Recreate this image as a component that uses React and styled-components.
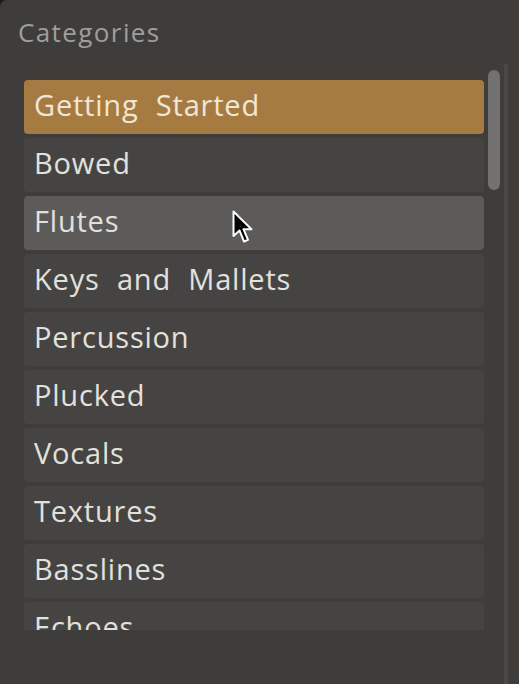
import React from 'react'
import styled, { createGlobalStyle } from 'styled-components'

const categories = [
	'Getting Started',
	'Bowed',
	'Flutes',
	'Keys and Mallets',
	'Percussion',
	'Plucked',
	'Vocals',
	'Textures',
	'Basslines',
	'Echoes',
]

const GlobalStyle = createGlobalStyle`
	html, body {
		margin: 0;
		padding: 0;
		background: #1c1c1b;
	}
	* {
		box-sizing: border-box;
	}
`

const Panel = styled.div`
	width: 519px;
	height: 684px;
	background: #3e3d3b;
	border-top-left-radius: 7px;
	overflow: hidden;
	display: flex;
	flex-direction: column;
	font-family: 'Open Sans', 'DejaVu Sans', sans-serif;
`

const Title = styled.div`
	height: 64px;
	padding: 19px 0 0 18px;
	font-size: 26px;
	line-height: 26px;
	letter-spacing: 1.4px;
	color: #a09e9b;
`

const Body = styled.div`
	flex: 1;
	display: flex;
`

// list is cut at the bottom, the last row peeks in
const Viewport = styled.div`
	width: 488px;
	height: 566px;
	overflow: hidden;
	padding: 16px 4px 0 24px;
	display: flex;
	flex-direction: column;
	gap: 4px;
`

const Row = styled.div`
	position: relative;
	flex-shrink: 0;
	height: 54px;
	padding: 0 0 5px 10px;
	display: flex;
	align-items: center;
	border-radius: 4px;
	font-size: 29px;
	letter-spacing: 0.8px;
	word-spacing: 9px;
	color: ${(p) => (p.$selected ? '#f1e7d6' : '#e3e1dd')};
	background: ${(p) =>
		p.$selected ? '#a57b42' : p.$hovered ? '#5c5b59' : '#454442'};
`

const ScrollColumn = styled.div`
	width: 16px;
	padding-top: 6px;
`

const Thumb = styled.div`
	width: 12px;
	height: 120px;
	border-radius: 6px;
	background: #737170;
`

const Track = styled.div`
	width: 4px;
	background: #4a4947;
`

const Pointer = styled.svg`
	position: absolute;
	left: 208px;
	top: 14px;
	width: 22px;
	height: 34px;
`

const Cursor = () => (
	<Pointer viewBox="0 0 22 34">
		<path
			d="M1.5 1.5 L1.5 26 L7.5 20.5 L12 31.5 L16 29.8 L11.5 19.2 L19.5 19.2 Z"
			fill="#000"
			stroke="#fff"
			strokeWidth="2"
			strokeLinejoin="round"
		/>
	</Pointer>
)

const App = () => {
	return (
		<>
			<GlobalStyle />
			<Panel>
				<Title>Categories</Title>
				<Body>
					<Viewport>
						{categories.map((name, i) => (
							<Row key={name} $selected={i === 0} $hovered={i === 2}>
								{name}
								{i === 2 && <Cursor />}
							</Row>
						))}
					</Viewport>
					<ScrollColumn>
						<Thumb />
					</ScrollColumn>
					<Track />
				</Body>
			</Panel>
		</>
	)
}

export default App
